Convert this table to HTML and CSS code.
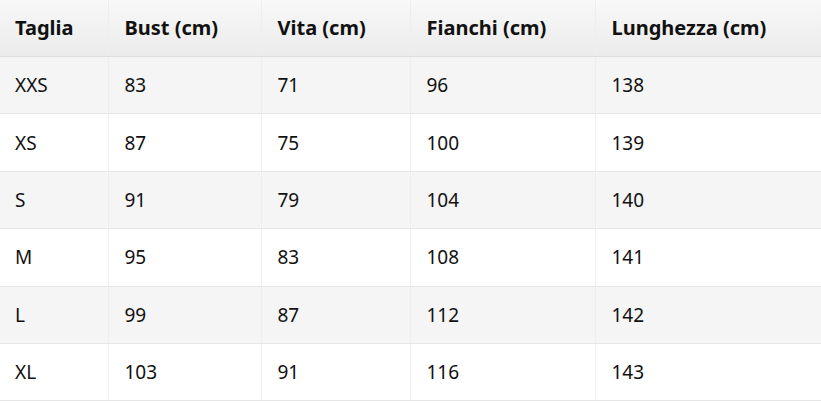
FILE: index.html
```html
<!DOCTYPE html>
<html lang="it">
<head>
<meta charset="utf-8">
<title>Tabella taglie</title>
<link rel="stylesheet" href="styles.css">
</head>
<body>
<table class="size-table">
  <colgroup>
    <col class="c1"><col class="c2"><col class="c3"><col class="c4"><col class="c5">
  </colgroup>
  <thead>
    <tr><th>Taglia</th><th>Bust (cm)</th><th>Vita (cm)</th><th>Fianchi (cm)</th><th>Lunghezza (cm)</th></tr>
  </thead>
  <tbody>
    <tr><td>XXS</td><td>83</td><td>71</td><td>96</td><td>138</td></tr>
    <tr><td>XS</td><td>87</td><td>75</td><td>100</td><td>139</td></tr>
    <tr><td>S</td><td>91</td><td>79</td><td>104</td><td>140</td></tr>
    <tr><td>M</td><td>95</td><td>83</td><td>108</td><td>141</td></tr>
    <tr><td>L</td><td>99</td><td>87</td><td>112</td><td>142</td></tr>
    <tr><td>XL</td><td>103</td><td>91</td><td>116</td><td>143</td></tr>
  </tbody>
</table>
</body>
</html>
```
FILE: styles.css
```css
html, body {
  margin: 0;
  padding: 0;
  background: #ffffff;
}
body {
  font-family: "Noto Sans", "Open Sans", sans-serif;
  font-size: 19px;
  color: #111111;
}
.size-table {
  width: 821px;
  border-collapse: collapse;
  table-layout: fixed;
}
.c1 { width: 108px; }
.c2 { width: 153px; }
.c3 { width: 149px; }
.c4 { width: 185px; }
.c5 { width: 226px; }
.size-table th,
.size-table td {
  text-align: left;
  padding: 0 16px;
  line-height: 24px;
  border-left: 1px solid #eeeeee;
  border-bottom: 1px solid #e6e6e6;
}
.size-table th:first-child,
.size-table td:first-child {
  border-left: none;
  padding-left: 15px;
}
.size-table th {
  height: 56px;
  font-size: 20px;
  font-weight: 700;
  background: linear-gradient(#f8f8f8, #ebebeb);
  border-bottom: 1px solid #dddddd;
}
.size-table td {
  height: 56.4px;
  font-weight: 400;
}
.size-table tbody tr:nth-child(odd) td {
  background: #f5f5f5;
}
```
